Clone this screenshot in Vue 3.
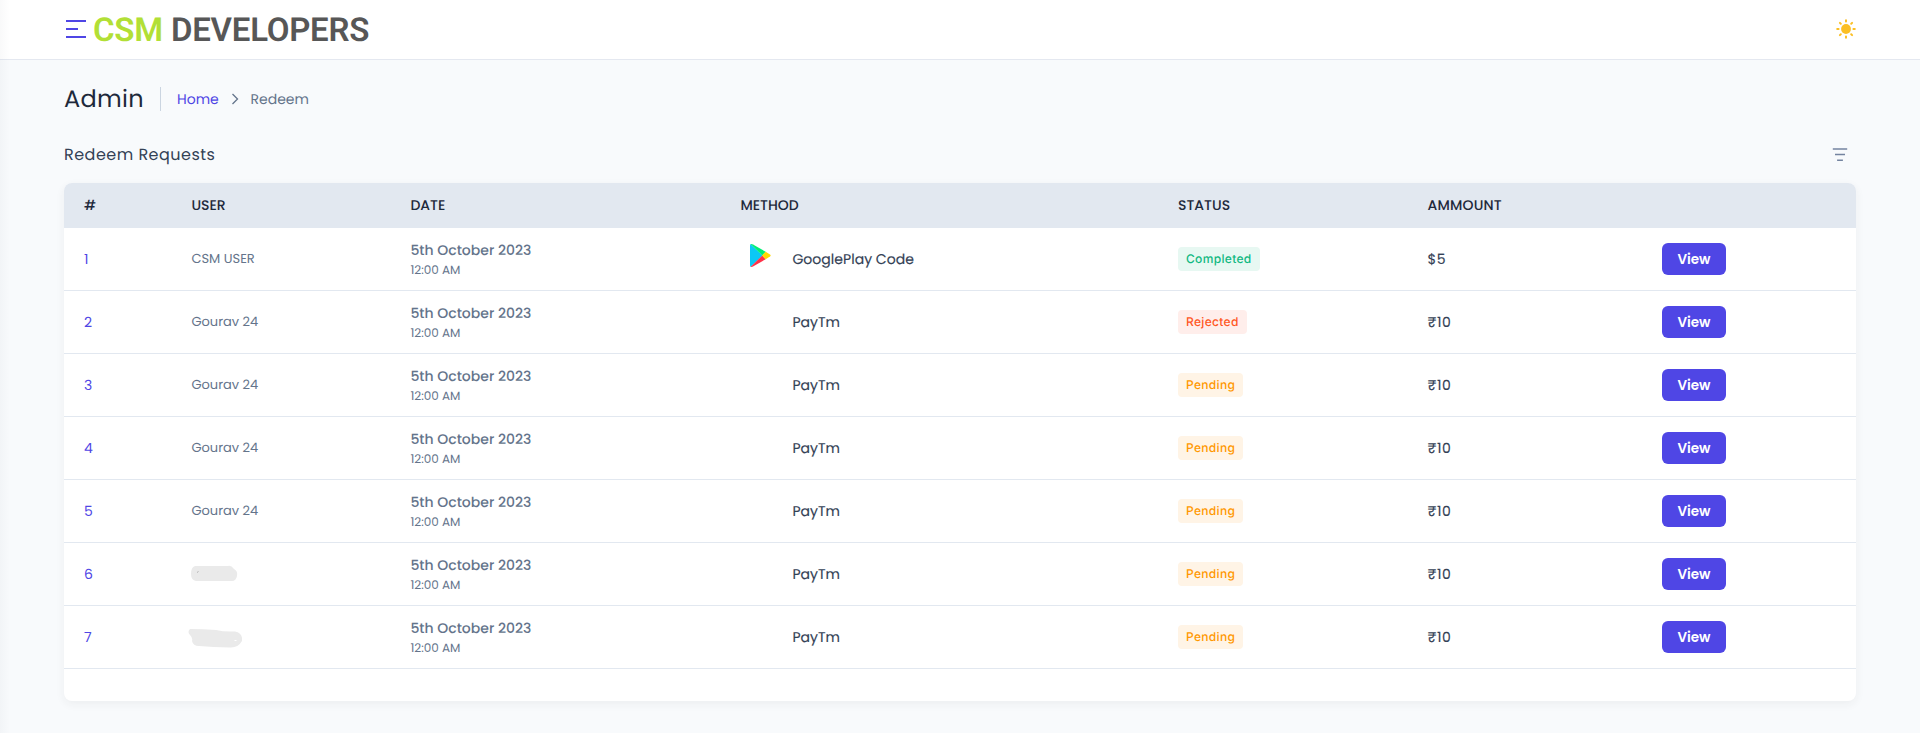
<script setup>
const rows = [
  { id: 1, user: 'CSM USER', method: 'GooglePlay Code', play: true, status: 'Completed', amount: '$5' },
  { id: 2, user: 'Gourav 24', method: 'PayTm', status: 'Rejected', amount: '₹10' },
  { id: 3, user: 'Gourav 24', method: 'PayTm', status: 'Pending', amount: '₹10' },
  { id: 4, user: 'Gourav 24', method: 'PayTm', status: 'Pending', amount: '₹10' },
  { id: 5, user: 'Gourav 24', method: 'PayTm', status: 'Pending', amount: '₹10' },
  { id: 6, mask: 'a', method: 'PayTm', status: 'Pending', amount: '₹10' },
  { id: 7, mask: 'b', method: 'PayTm', status: 'Pending', amount: '₹10' },
]
</script>

<template>
  <div class="page">
    <header class="topbar">
      <div class="brand">
        <div class="burger"><i></i><i></i><i></i></div>
        <div class="logo"><span class="csm">CSM</span><span class="dev">DEVELOPERS</span></div>
      </div>
      <svg class="sun" viewBox="0 0 20 20" width="20" height="20">
        <circle cx="10" cy="10" r="4.9" fill="#fbbf24" />
        <g stroke="#fbbf24" stroke-width="2" stroke-linecap="round">
          <path d="M10 1.2v1.4M10 17.4v1.4M1.2 10h1.4M17.4 10h1.4M3.9 3.9l.9.9M15.2 15.2l.9.9M16.1 3.9l-.9.9M4.8 15.2l-.9.9" />
        </g>
      </svg>
    </header>
    <main>
      <nav class="crumbs">
        <h2>Admin</h2>
        <span class="rule"></span>
        <a class="home">Home</a>
        <svg class="chev" viewBox="0 0 8 12" width="8" height="12"><path d="M1.5 1l5 5-5 5" fill="none" stroke="#64748b" stroke-width="1.3" /></svg>
        <span class="current">Redeem</span>
      </nav>
      <div class="section">
        <h3>Redeem Requests</h3>
        <svg viewBox="0 0 16 14" width="16" height="14"><path d="M.8 2h14.4M3 7.5h10M5.1 13.2h5.8" fill="none" stroke="#7484a0" stroke-width="1.6" /></svg>
      </div>
      <section class="card">
        <div class="row head">
          <span>#</span><span>USER</span><span>DATE</span><span>METHOD</span><span>STATUS</span><span class="h-amount">AMMOUNT</span><span></span>
        </div>
        <div v-for="r in rows" :key="r.id" class="row">
          <div class="num">{{ r.id }}</div>
          <div class="user">
            <template v-if="r.user">{{ r.user }}</template>
            <svg v-else-if="r.mask === 'a'" class="mask" viewBox="0 0 56 20" width="56" height="20">
              <path d="M10 2H43Q46 1 49 5Q53 7 52 12Q51 17 47 17H11Q6 16 6 10Q6 3 10 2Z" fill="#eaeaea" />
              <path d="M12 8.5l1.5-1" stroke="#999" stroke-width=".7" />
            </svg>
            <svg v-else class="mask low" viewBox="0 0 56 20" width="56" height="20">
              <path d="M4 0Q1 3 4 6Q7 9 6 12Q7 17 13 17Q27 18 44 18.500Q52 19 56 12Q57 4 49 2.500Q38 3 30 1Q17 0 4 0Z" fill="#eaeaea" />
              <path d="M48.500 11.500h2" stroke="#fff" stroke-width="1" />
            </svg>
          </div>
          <div class="date"><p>5th October 2023</p><small>12:00 AM</small></div>
          <div class="method">
            <span class="pic">
              <svg v-if="r.play" viewBox="0 0 21 23" width="21" height="23">
                <path d="M.5 0L12.500 11.500.5 23Q0 22 0 21V2Q0 1 .5 0Z" fill="#0cc8f5" />
                <path d="M.5 0Q1.500-.3 3 .5L15.700 7.800 12.300 11.500Z" fill="#00ee76" />
                <path d="M.5 23Q1.500 23.300 3 22.500L15.700 15.200 12.300 11.500Z" fill="#ff3148" />
                <path d="M15.700 7.800L20 10.400Q21.300 11.500 20 12.600L15.700 15.200 12 11.500Z" fill="#ffd900" />
              </svg>
            </span>
            <span class="name">{{ r.method }}</span>
          </div>
          <div><span class="badge" :class="r.status.toLowerCase()">{{ r.status }}</span></div>
          <div class="amount">{{ r.amount }}</div>
          <div><button>View</button></div>
        </div>
      </section>
    </main>
  </div>
</template>

<style>
body { background: #f8fafc; }
</style>

<style scoped>
* { box-sizing: border-box; }
h2, h3, p { margin: 0; font-weight: 400; }
.page {
  position: relative;
  height: 733px;
  overflow: hidden;
  background: #f8fafc;
  color: #334155;
  font-family: Poppins, Inter, "Noto Sans", sans-serif;
  font-size: 14px;
  white-space: nowrap;
  text-rendering: geometricPrecision;
}
.page::before {
  content: "";
  position: absolute;
  inset: 0 auto 0 0;
  width: 10px;
  z-index: 2;
  background: linear-gradient(to right, rgba(100, 110, 125, .04), rgba(100, 110, 125, 0));
}
.topbar {
  height: 60px;
  background: #fff;
  border-bottom: 1px solid #e4e8f0;
  display: flex;
  justify-content: space-between;
  align-items: center;
  padding: 0 64px 1px 66px;
}
.brand { display: flex; align-items: center; gap: 7px; }
.burger { display: flex; flex-direction: column; gap: 6px; }
.burger i { width: 20px; height: 2px; background: #4f46e5; }
.burger i:nth-child(2) { width: 12px; }
.logo { display: flex; gap: 10px; padding-top: 3px; font: 600 33px/40px Roboto, sans-serif; letter-spacing: -.25px; }
.csm { color: #b2df36; width: 68px; }
.dev { color: #575757; }
.sun { display: block; }
main { padding: 0 64px; }
.crumbs { display: flex; align-items: center; height: 78px; }
h2 { width: 80px; font-size: 24px; color: #1e293b; letter-spacing: .3px; }
.rule { width: 1px; height: 24px; background: #cbd5e1; margin: 0 16px; }
.home { color: #4f46e5; width: 43px; }
.chev { margin: 0 11.500px 0 11px; }
.current { color: #64748b; }
.section { display: flex; justify-content: space-between; align-items: center; height: 32px; padding-right: 8px; margin-bottom: 13px; }
h3 { font-size: 16px; letter-spacing: .48px; }
.card { height: 518px; border-radius: 8px; background: #fff; box-shadow: 0 3px 10px rgba(48, 46, 56, .06); overflow: hidden; }
.row {
  display: grid;
  grid-template-columns: 107.4px 219px 330px 437.6px 249.5px 234.5px 1fr;
  align-items: center;
  height: 63px;
  border-bottom: 1px solid #e2e8f0;
}
.row > * { padding-left: 20px; }
.head { height: 45px; background: #e2e8f0; color: #1e293b; font-weight: 500; }
.h-amount { letter-spacing: .2px; }
.num { color: #4f46e5; }
.user { color: #64748b; font-size: 13px; }
.mask { display: block; margin-left: -6px; }
.mask.low { margin: 3px 0 0 -5.500px; }
.date { color: #64748b; }
.date p { line-height: 20px; font-weight: 500; }
.date small { display: block; font-size: 12px; line-height: 16px; margin-top: 2px; position: relative; top: 1px; }
.method { display: flex; align-items: center; }
.name { letter-spacing: .04px; -webkit-text-stroke: .15px currentColor; }
.amount { letter-spacing: .6px; -webkit-text-stroke: .15px currentColor; }
.pic { width: 52px; padding-left: 9.500px; height: 31px; }
.pic svg { display: block; }
.badge { display: flex; width: max-content; align-items: center; height: 24px; padding: 0 8px 1px; border-radius: 4px; font: 500 12px Inter, sans-serif; letter-spacing: .33px; }
.completed { background: #e7f8f2; color: #10b981; }
.rejected { background: #ffeeeb; color: #ff5724; }
.pending { background: #fff4e6; color: #ff9800; }
button { display: block; width: 64px; height: 32px; border: 0; border-radius: 6px; background: #4f46e5; color: #fff; font: inherit; font-weight: 600; font-size: 13.500px; padding: 1px 0 0; }
</style>
